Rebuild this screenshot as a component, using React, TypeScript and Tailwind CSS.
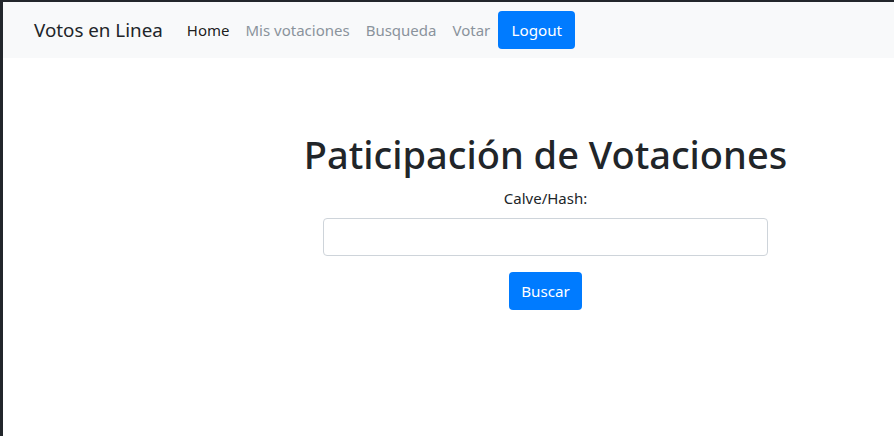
export default function App() {
  return (
    <div className="min-h-screen bg-[#22262b] pl-[3px] pt-[2px] font-['Noto_Sans',sans-serif] text-[#212529]">
      <div className="min-h-[434px] bg-white">
        <nav className="flex h-[56px] items-center bg-[#f8f9fa] pl-[31px]">
          <span className="mr-[16px] text-[18.8px] text-[#212529]">Votos en Linea</span>
          <a className="px-2 text-[15px] text-black/90">Home</a>
          <a className="px-2 text-[15px] text-[#8a939c]">Mis votaciones</a>
          <a className="px-2 text-[15px] text-[#8a939c]">Busqueda</a>
          <a className="px-2 text-[15px] text-[#8a939c]">Votar</a>
          <button className="h-[38px] w-[77px] rounded-[4px] bg-[#007bff] text-[15.2px] text-white">Logout</button>
        </nav>
        <div className="ml-[320px] mt-[72px] flex w-[445px] flex-col items-center">
          <h1 className="whitespace-nowrap text-[38px] font-medium leading-[48px]">Paticipación de Votaciones</h1>
          <label className="mt-[8px] text-[15px] leading-[24px]">Calve/Hash:</label>
          <input className="mt-[8px] h-[38px] w-full rounded-[4px] border border-[#ced4da] bg-white px-3" />
          <button className="mt-[16px] h-[38px] w-[73px] rounded-[4px] bg-[#007bff] text-[15.2px] text-white">Buscar</button>
        </div>
      </div>
    </div>
  );
}
